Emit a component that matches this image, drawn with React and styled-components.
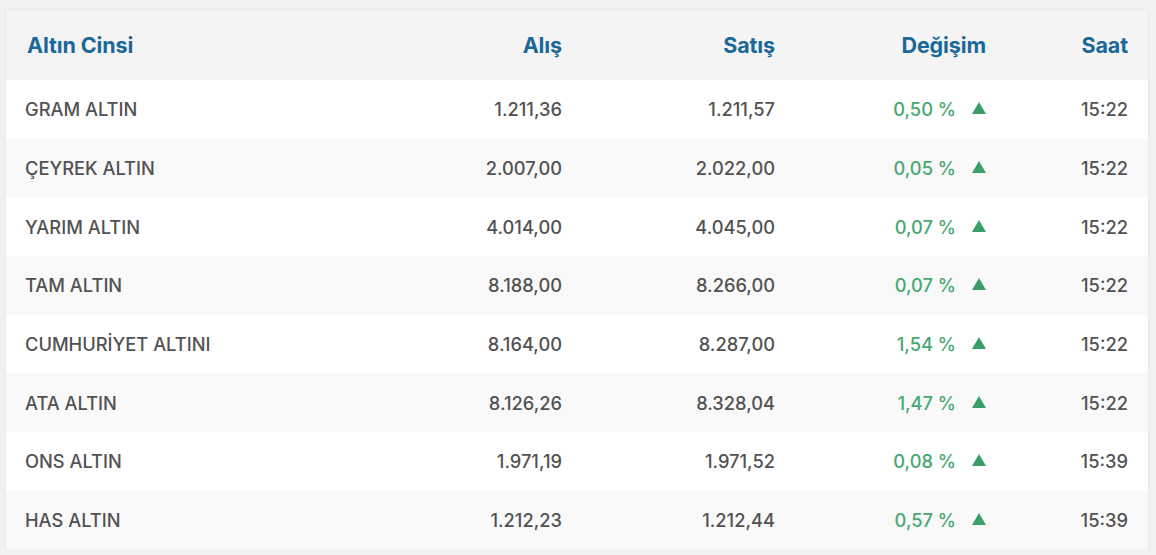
import React from 'react';
import styled, { createGlobalStyle } from 'styled-components';

const rows = [
  ['GRAM ALTIN', '1.211,36', '1.211,57', '0,50', '15:22'],
  ['ÇEYREK ALTIN', '2.007,00', '2.022,00', '0,05', '15:22'],
  ['YARIM ALTIN', '4.014,00', '4.045,00', '0,07', '15:22'],
  ['TAM ALTIN', '8.188,00', '8.266,00', '0,07', '15:22'],
  ['CUMHURİYET ALTINI', '8.164,00', '8.287,00', '1,54', '15:22'],
  ['ATA ALTIN', '8.126,26', '8.328,04', '1,47', '15:22'],
  ['ONS ALTIN', '1.971,19', '1.971,52', '0,08', '15:39'],
  ['HAS ALTIN', '1.212,23', '1.212,44', '0,57', '15:39'],
];

const Global = createGlobalStyle`
  body {
    margin: 0;
    background: #f1f1f1;
    font-family: Inter, "Noto Sans", sans-serif;
  }
`;

const Page = styled.div`
  padding: 10px 8px 0 6px;
`;

const Card = styled.div`
  background: #fff;
  box-shadow: 0 0 3px rgba(0, 0, 0, 0.08);
  border-radius: 3px;
  overflow: hidden;
`;

const Row = styled.div`
  display: grid;
  grid-template-columns: 1fr 200px 213px 211px 142px;
  align-items: center;
  padding: 0 20px 0 19px;
  height: ${p => (p.$head ? '70px' : '58.67px')};
  background: ${p => (p.$head ? '#f4f4f4' : p.$odd ? '#f9f9f9' : '#fff')};
`;

const HeadCell = styled.div`
  font-size: 21.5px;
  font-weight: 700;
  color: #1a6898;
  letter-spacing: -0.1px;
  text-align: ${p => (p.$left ? 'left' : 'right')};
  padding-left: ${p => (p.$left ? '2px' : '0')};
`;

const Cell = styled.div`
  font-size: 18.3px;
  font-weight: 500;
  color: #525252;
  text-align: ${p => (p.$left ? 'left' : 'right')};
`;

const Change = styled.div`
  display: flex;
  justify-content: flex-end;
  align-items: center;
  gap: 16px;
  font-size: 18.3px;
  font-weight: 500;
  color: #47a872;
`;

const Up = styled.span`
  width: 0;
  height: 0;
  border-left: 7px solid transparent;
  border-right: 7px solid transparent;
  border-bottom: 12px solid #3a9f66;
  margin-bottom: 2px;
`;

export default function App() {
  return (
    <Page>
      <Global />
      <Card>
        <Row $head>
          <HeadCell $left>Altın Cinsi</HeadCell>
          <HeadCell>Alış</HeadCell>
          <HeadCell>Satış</HeadCell>
          <HeadCell>Değişim</HeadCell>
          <HeadCell>Saat</HeadCell>
        </Row>
        {rows.map(([name, buy, sell, chg, time], i) => (
          <Row key={name} $odd={i % 2 === 1}>
            <Cell $left>{name}</Cell>
            <Cell>{buy}</Cell>
            <Cell>{sell}</Cell>
            <Change>
              <span>{chg} %</span>
              <Up />
            </Change>
            <Cell>{time}</Cell>
          </Row>
        ))}
      </Card>
    </Page>
  );
}
